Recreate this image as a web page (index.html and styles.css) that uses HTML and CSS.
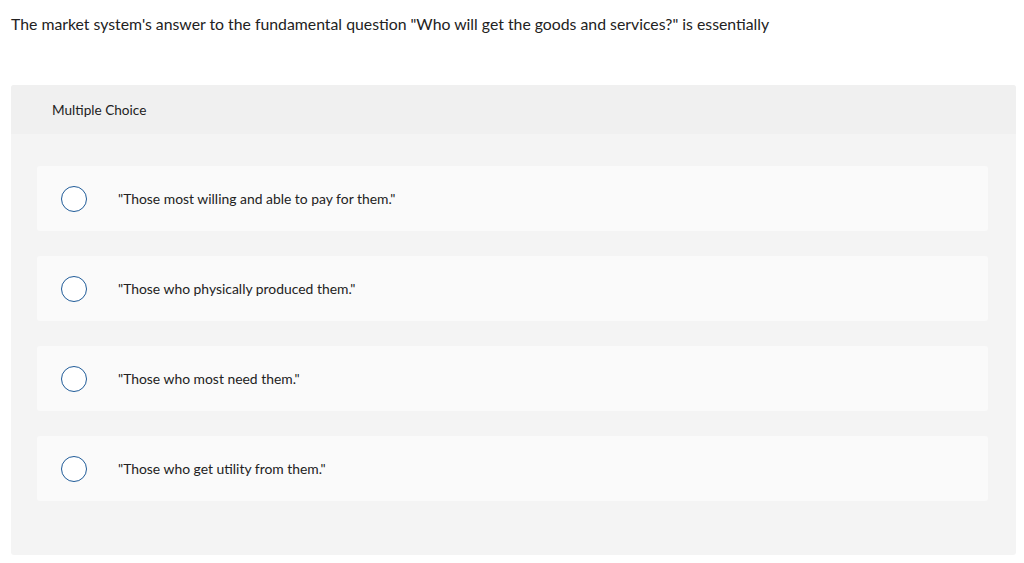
FILE: index.html
```html
<!DOCTYPE html>
<html>
<head>
<meta charset="utf-8">
<link rel="stylesheet" href="styles.css">
</head>
<body>
<p class="question">The market system's answer to the fundamental question "Who will get the goods and services?" is essentially</p>
<div class="card">
  <div class="card-header">Multiple Choice</div>
  <div class="card-body">
    <div class="option"><span class="radio"></span><span class="label">"Those most willing and able to pay for them."</span></div>
    <div class="option"><span class="radio"></span><span class="label">"Those who physically produced them."</span></div>
    <div class="option"><span class="radio"></span><span class="label">"Those who most need them."</span></div>
    <div class="option"><span class="radio"></span><span class="label">"Those who get utility from them."</span></div>
  </div>
</div>
</body>
</html>
```
FILE: styles.css
```css
html, body { margin: 0; padding: 0; background: #fff; }
body {
  font-family: "Lato", "Open Sans", sans-serif;
  color: #222;
  padding: 0 8px 0 11px;
}
.question {
  margin: 0;
  padding-top: 14px;
  font-size: 15.8px;
  line-height: 20px;
  height: 71px;
}
.card {
  width: 1005px;
  border-radius: 3px;
  overflow: hidden;
  background: #f4f4f4;
}
.card-header {
  background: #f0f0f0;
  height: 49px;
  box-sizing: border-box;
  padding: 17px 0 0 41px;
  font-size: 13.6px;
  line-height: 16px;
  color: #222;
}
.card-body {
  padding: 32px 28px 54px 26px;
  display: flex;
  flex-direction: column;
  gap: 25px;
}
.option {
  background: #fafafa;
  height: 65px;
  border-radius: 3px;
  display: flex;
  align-items: center;
  padding-left: 24px;
}
.radio {
  width: 24px;
  height: 24px;
  border: 1.5px solid #1f5b98;
  border-radius: 50%;
  background: #fff;
  flex: none;
}
.label {
  margin-left: 31px;
  font-size: 13.9px;
  color: #222;
}
```
